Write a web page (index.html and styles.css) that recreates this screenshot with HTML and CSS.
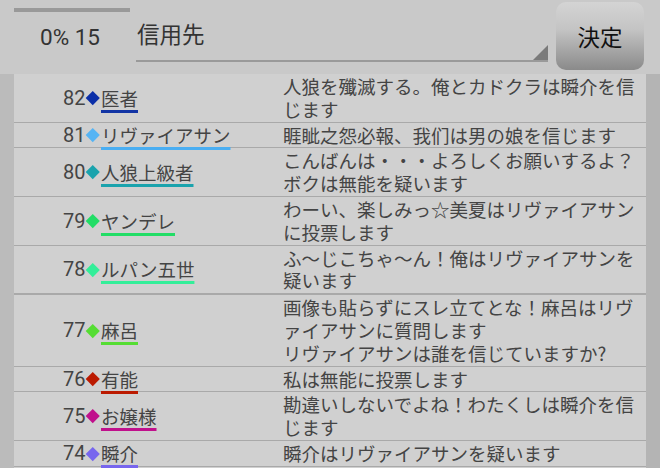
FILE: index.html
```html
<!DOCTYPE html>
<html lang="ja">
<head>
  <meta charset="UTF-8" />
  <title>投票</title>
  <link rel="stylesheet" href="styles.css">
</head>
<body>

<header class="cabecera">
  <div class="progreso">
    <div class="barra"></div>
    <div class="cuenta">0% 15</div>
  </div>
  <div class="selector">
    <span>信用先</span>
    <i class="triangulo"></i>
  </div>
  <button class="decidir">決定</button>
</header>

<div class="marco">
  <div class="lista">
    <div class="fila">
      <div class="quien">82<i class="rombo" style="background:#0b2fa8"></i><span class="nombre" style="text-decoration-color:#1234a4">医者</span></div>
      <div class="dicho">人狼を殲滅する。俺とカドクラは瞬介を信じます</div>
    </div>
    <div class="fila">
      <div class="quien">81<i class="rombo" style="background:#55b4f4"></i><span class="nombre" style="text-decoration-color:#4aaef2">リヴァイアサン</span></div>
      <div class="dicho">睚眦之怨必報、我们は男の娘を信じます</div>
    </div>
    <div class="fila">
      <div class="quien">80<i class="rombo" style="background:#1aa3ad"></i><span class="nombre" style="text-decoration-color:#1aa3ad">人狼上級者</span></div>
      <div class="dicho">こんばんは・・・よろしくお願いするよ？ボクは無能を疑います</div>
    </div>
    <div class="fila">
      <div class="quien">79<i class="rombo" style="background:#22dd66"></i><span class="nombre" style="text-decoration-color:#22dd66">ヤンデレ</span></div>
      <div class="dicho">わーい、楽しみっ☆美夏はリヴァイアサンに投票します</div>
    </div>
    <div class="fila">
      <div class="quien">78<i class="rombo" style="background:#33ee99"></i><span class="nombre" style="text-decoration-color:#33ee99">ルパン五世</span></div>
      <div class="dicho">ふ～じこちゃ～ん！俺はリヴァイアサンを疑います</div>
    </div>
    <div class="fila gruesa">
      <div class="quien">77<i class="rombo" style="background:#55dd33"></i><span class="nombre" style="text-decoration-color:#55dd33">麻呂</span></div>
      <div class="dicho">画像も貼らずにスレ立てとな！麻呂はリヴァイアサンに質問します<br>リヴァイアサンは誰を信じていますか?</div>
    </div>
    <div class="fila">
      <div class="quien">76<i class="rombo" style="background:#bb1a00"></i><span class="nombre" style="text-decoration-color:#bb1a00">有能</span></div>
      <div class="dicho">私は無能に投票します</div>
    </div>
    <div class="fila">
      <div class="quien">75<i class="rombo" style="background:#c0108c"></i><span class="nombre" style="text-decoration-color:#c0108c">お嬢様</span></div>
      <div class="dicho">勘違いしないでよね！わたくしは瞬介を信じます</div>
    </div>
    <div class="fila">
      <div class="quien">74<i class="rombo" style="background:#7766ee"></i><span class="nombre" style="text-decoration-color:#7766ee">瞬介</span></div>
      <div class="dicho">瞬介はリヴァイアサンを疑います</div>
    </div>
    <div class="fila vacia"></div>
  </div>
</div>

</body>
</html>
```

FILE: styles.css
```css
body { margin: 0; background: #c9c9c9; font-family: Roboto, "Noto Sans CJK JP", sans-serif; color: #444; height: 468px; overflow: hidden; }
.cabecera { display: flex; height: 74px; padding: 0 14px; box-sizing: border-box; }
.progreso { width: 116px; padding-top: 8px; }
.barra { height: 4px; background: #999; }
.cuenta { text-align: center; font-size: 22.5px; color: #333; margin-top: 12px; padding-right: 4px; }
.selector { position: relative; width: 412px; height: 62px; margin-left: 6px; border-bottom: 2px solid #9a9a9a; box-sizing: border-box; }
.selector span { display: block; font-family: "Noto Sans CJK JP", sans-serif; font-size: 22.5px; color: #333; padding-top: 18px; padding-left: 1px; line-height: 30px; }
.triangulo { position: absolute; right: 0; bottom: 0; width: 0; height: 0; border-left: 15px solid transparent; border-bottom: 15px solid #7a7a7a; }
.decidir { margin-left: 8px; margin-top: 2px; width: 88px; height: 68px; border: none; border-radius: 10px; background: linear-gradient(#d4d4d4, #c4c4c4 40%, #8a8a8a); font-family: "Noto Sans CJK JP", sans-serif; font-size: 22.5px; color: #111; padding: 0; }
.marco { background: linear-gradient(to right, #bbb 0, #bbb 14px, transparent 14px, transparent 646px, #b4b4b4 646px); padding: 0 14px; height: 394px; }
.lista { background: #d0d0d0; }
.fila { display: grid; grid-template-columns: 269px 1fr; border-bottom: 1px solid #a9a9a9; padding: 1px 0; align-items: center; }
.fila.gruesa { border-top: 1px solid #a9a9a9; }
.fila.vacia { height: 24px; }
.quien { padding-left: 49px; font-size: 20px; line-height: 22px; display: flex; align-items: center; }
.rombo { display: inline-block; width: 9.5px; height: 9.5px; transform: rotate(45deg); margin: 0 3px 0 3px; }
.nombre { font-family: "Noto Sans CJK JP", sans-serif; font-size: 18.5px; line-height: 22px; text-decoration: underline 3px; text-underline-offset: 4px; }
.dicho { font-family: "Noto Sans CJK JP", sans-serif; font-size: 18.5px; line-height: 22.8px; padding-right: 6px; }
```
